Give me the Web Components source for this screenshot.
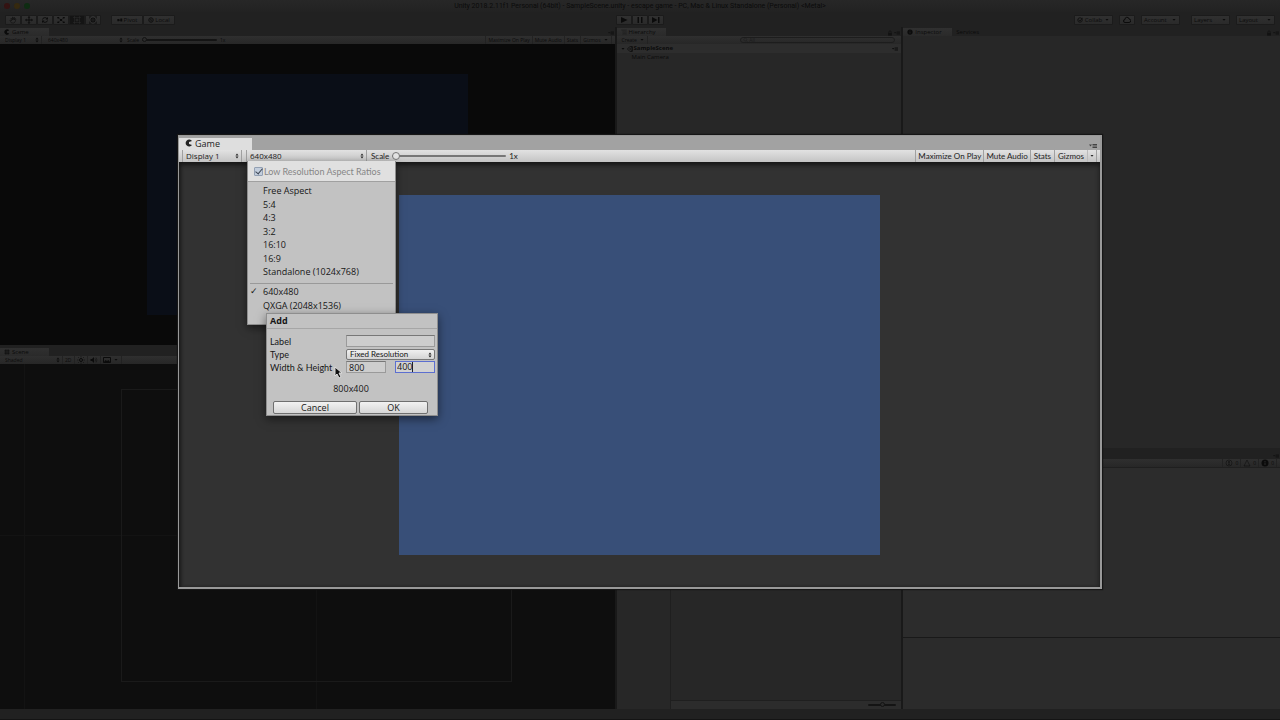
<!DOCTYPE html>
<html lang="en">
<head>
<meta charset="utf-8">
<title>Unity 2018.2.11f1 Personal</title>
<style>
  html, body {
    margin: 0;
    height: 100%;
    overflow: hidden;
    background: #212121;
    font-family: "Open Sans", "Noto Sans", sans-serif;
  }
</style>
</head>
<body>
<unity-editor></unity-editor>

<script>
// shared by every control that sits in a toolbar
const controlStyle = `
  * { box-sizing: border-box; }
  button, select, input {
    margin: 0;
    padding: 0;
    border: 0;
    background: none;
    color: inherit;
    font: inherit;
    appearance: none;
    outline: none;
    border-radius: 0;
  }
`;

class UnityElement extends HTMLElement {
  constructor() {
    super();
    this.attachShadow({ mode: 'open' });
  }

  connectedCallback() {
    this.shadowRoot.innerHTML = `<style>${controlStyle}</style>` + this.render();
  }
}

const icons = {
  hand: '<path d="M5 14 2 9l1-1 2 2-1-5 1-1 2 4V2h1l1 5 1-4h1v5l2-3 1 1-2 6-2 2z" fill="none" stroke="currentColor"/>',
  move: '<path d="M8 0l3 3H9v4h4V5l3 3-3 3V9H9v4h2l-3 3-3-3h2V9H3v2L0 8l3-3v2h4V3H5z" fill="currentColor"/>',
  rotate: '<path d="M3 7a5 4 0 0 1 9-2M13 9a5 4 0 0 1-9 2" fill="none" stroke="currentColor" stroke-width="2"/><path d="M14 2v5H9zM2 14V9h5z" fill="currentColor"/>',
  scale: '<path d="M0 2h5L2 6zM16 2h-5l3 4zM0 14h5l-3-4zM16 14h-5l3-4zM6 6h4v4H6z" fill="currentColor"/><path d="M2 3l12 10M14 3L2 13" stroke="currentColor"/>',
  rect: '<path d="M3 0v16M13 0v16M0 3h16M0 13h16" stroke="currentColor"/><circle cx="8" cy="8" r="2" fill="none" stroke="currentColor" stroke-width="2"/>',
  transform: '<path d="M1 1h4M1 1v4M15 1h-4M15 1v4M1 15h4M1 15v-4M15 15h-4M15 15v-4M3 3l10 10M13 3L3 13" stroke="currentColor"/><circle cx="8" cy="8" r="4" fill="none" stroke="currentColor" stroke-width="2"/>',
  pivot: '<path d="M1 5h5v6H1zM9 4h5v8H9zM6 7h3v2H6z" fill="currentColor"/>',
  globe: '<circle cx="8" cy="8" r="6" fill="none" stroke="currentColor" stroke-width="2"/><path d="M2 8h12M8 2v12M4 4l8 8" stroke="currentColor"/>',
  play: '<path d="M2 2l13 6-13 6z" fill="currentColor"/>',
  pause: '<path d="M3 2h3v12H3zM10 2h3v12h-3z" fill="currentColor"/>',
  step: '<path d="M0 2l11 6-11 6zM12 2h3v12h-3z" fill="currentColor"/>',
  collab: '<circle cx="8" cy="8" r="6" fill="none" stroke="currentColor" stroke-width="2"/><path d="M4 7l4 4 7-9" fill="none" stroke="currentColor" stroke-width="2"/>',
  cloud: '<path d="M4 13a3 3 0 0 1 0-6 4 4 0 0 1 8-1 3 3 0 0 1 0 7z" fill="none" stroke="currentColor" stroke-width="2"/>',
  game: '<path d="M14 4A7 7 0 1 0 14 12L8 10V6z" fill="currentColor"/>',
  scene: '<path d="M5 1v14M11 1v14M1 5h14M1 11h14" stroke="currentColor" stroke-width="2"/>',
  list: '<path d="M1 3h14M4 8h11M4 13h11" stroke="currentColor"/>',
  info: '<circle cx="8" cy="8" r="7" fill="currentColor"/><path d="M8 4v2M8 7v5" stroke="#2a2a2a" stroke-width="2"/>',
  lock: '<path d="M3 8h10v7H3z" fill="currentColor"/><path d="M5 8V4q3-4 6 0v4" fill="none" stroke="currentColor" stroke-width="2"/>',
  menu: '<path d="M0 5h6l-3 4z" fill="currentColor"/><path d="M7 5h9M7 8h9M7 11h9" stroke="currentColor" stroke-width="2"/>',
  unity: '<path d="M1 8l6-6 7-1 1 7-1 7-7-1zM5 8h5M10 8l3-5M10 8l3 5" fill="none" stroke="currentColor" stroke-width="2"/>',
  down: '<path d="M4 5h8l-4 5z" fill="currentColor"/>',
  sun: '<circle cx="8" cy="8" r="3" fill="none" stroke="currentColor" stroke-width="2"/><path d="M8 0v3M8 13v3M0 8h3M13 8h3M2 2l2 2M12 12l2 2M14 2l-2 2M4 12l-2 2" stroke="currentColor"/>',
  sound: '<path d="M1 6h3l4-4v12l-4-4H1z" fill="currentColor"/><path d="M10 5q2 3 0 6M12 3q4 5 0 10" fill="none" stroke="currentColor"/>',
  image: '<path d="M1 3h14v10H1z" fill="none" stroke="currentColor" stroke-width="2"/><path d="M2 12l3-4 3 2 3-2 3 4z" fill="currentColor"/>',
  bubble: '<circle cx="8" cy="8" r="6" fill="none" stroke="currentColor"/><path d="M8 4v5M8 10v2" stroke="currentColor" stroke-width="2"/>',
  warning: '<path d="M8 2l6 12H2z" fill="none" stroke="currentColor"/>',
  search: '<circle cx="6" cy="7" r="4" fill="none" stroke="currentColor"/><path d="M9 10l4 4" stroke="currentColor"/>'
};

class UnityIcon extends UnityElement {
  render() {
    return `
      <style>
        :host { display: inline-flex; width: 8px; height: 8px; flex: none; }
        :host([size="large"]) { width: 10px; height: 10px; }
        :host([size="small"]) { width: 6px; height: 6px; }
        svg { width: 100%; height: 100%; }
      </style>
      <svg viewBox="0 0 16 16" aria-hidden="true">${icons[this.getAttribute('name')]}</svg>
    `;
  }
}

class UnitySelect extends UnityElement {
  render() {
    return `
      <style>
        :host { display: flex; align-items: center; position: relative; }
        select { flex: 1; width: 100%; height: 100%; padding: 0 8px 0 var(--select-inset, 4px); }
        svg { position: absolute; right: 2px; top: calc(50% - 3px); width: 4px; height: 6px; pointer-events: none; }
      </style>
      <select aria-label="${this.getAttribute('label')}"><option>${this.getAttribute('value')}</option></select>
      <svg viewBox="0 0 8 12"><path d="M1 5l3-4 3 4zM1 7l3 4 3-4z" fill="currentColor"/></svg>
    `;
  }
}

// grouped push button of the main toolbar
class UnityButton extends UnityElement {
  render() {
    return `
      <style>
        :host { display: flex; }
        button {
          flex: 1;
          display: flex;
          align-items: center;
          justify-content: center;
          gap: 1px;
          height: 10px;
          padding: 0 2px;
          background: linear-gradient(#303030, #2a2a2a);
          border: 1px solid #1b1b1b;
          border-radius: 1px;
        }
        :host([active]) button { background: #141414; color: #2c2c2c; }
        :host([spread]) button { justify-content: space-between; }
      </style>
      <button aria-label="${this.getAttribute('label') || ''}"><slot></slot></button>
    `;
  }
}

class UnityPanel extends UnityElement {
  render() {
    return `
      <style>
        :host { display: flex; flex-direction: column; min-width: 0; min-height: 0; background: #272727; font-size: 6px; color: #0b0b0b; }
        .tabs { display: flex; align-items: flex-end; height: 9px; flex: none; background: #212121; }
        .corner { display: flex; gap: 1px; margin-left: auto; padding-right: 1px; color: #121212; }
        .content { flex: 1; min-height: 0; position: relative; display: flex; flex-direction: column; }
      </style>
      <div class="tabs"><slot name="tab"></slot><div class="corner"><slot name="corner"></slot></div></div>
      <slot name="tools"></slot>
      <div class="content"><slot></slot></div>
    `;
  }
}

class UnityTab extends UnityElement {
  render() {
    return `
      <style>
        :host { display: block; min-width: 49px; height: 8px; background: linear-gradient(#303030, #2a2a2a); }
        :host([idle]) { background: none; }
        button { display: flex; align-items: center; gap: 2px; height: 8px; padding: 0 4px; line-height: 8px; }
      </style>
      <button role="tab"><slot></slot></button>
    `;
  }
}

class UnityToolbar extends UnityElement {
  render() {
    return `
      <style>
        :host {
          display: flex;
          align-items: stretch;
          flex: none;
          height: 8px;
          padding: 0 3px;
          background: linear-gradient(#2f2f2f, #272727);
          font-size: 5px;
          line-height: 8px;
        }
        ::slotted(*) { border-right: 1px solid #222; padding: 0 2px; }
        ::slotted(.plain) { border: 0; }
        ::slotted(.push) { margin-left: auto; border-left: 1px solid #222; }
      </style>
      <slot></slot>
    `;
  }
}

class ToolItem extends UnityElement {
  render() {
    return `
      <style>
        :host { display: flex; align-items: center; }
        button { display: flex; align-items: center; gap: 2px; line-height: 8px; white-space: nowrap; }
      </style>
      <button><slot></slot></button>
    `;
  }
}

class ScaleSlider extends UnityElement {
  render() {
    return `
      <style>
        :host { display: flex; align-items: center; gap: 3px; }
        input { width: var(--track, 75px); height: 8px; }
        input::-webkit-slider-runnable-track { height: 2px; background: var(--groove, #141414); border-radius: 1px; }
        input::-webkit-slider-thumb {
          appearance: none;
          width: var(--knob, 5px);
          height: var(--knob, 5px);
          margin-top: var(--knob-lift, -2px);
          border: 1px solid var(--groove, #141414);
          border-radius: 50%;
          background: var(--knob-fill, #2a2a2a);
        }
      </style>
      <label for="scale"><slot></slot></label>
      <input id="scale" type="range" min="1" max="5" value="${this.getAttribute('value') || 1}" aria-label="Scale">
      <slot name="value"></slot>
    `;
  }
}

class SizeMenu extends UnityElement {
  render() {
    const builtIn = ['Free Aspect', '5:4', '4:3', '3:2', '16:10', '16:9', 'Standalone (1024x768)'];
    const custom = ['640x480', 'QXGA (2048x1536)'];
    const item = name => `<button role="menuitemradio" class="${name === '640x480' ? 'checked' : ''}">${name}</button>`;
    return `
      <style>
        :host {
          display: block;
          width: 149px;
          height: 164px;
          background: #c2c2c2;
          border: 1px solid #8e8e8e;
          border-top: 0;
          box-shadow: 0 3px 8px rgba(0, 0, 0, .5);
          color: #161616;
          font-size: 9px;
        }
        label {
          display: flex;
          align-items: center;
          height: 21px;
          padding-left: 6px;
          background: #e0e0e0;
          border-bottom: 1px solid #a0a0a0;
          color: #868686;
          font-family: Lato, sans-serif;
          white-space: nowrap;
        }
        input { width: 9px; height: 9px; margin-right: 1px; background: #c3cedd; border: 1px solid #93a0b3; border-radius: 1px; }
        input::before {
          content: "";
          display: block;
          width: 3px;
          height: 6px;
          margin: -1px 0 0 2px;
          border: solid #3d4654;
          border-width: 0 1px 1px 0;
          transform: rotate(40deg);
        }
        .group { display: flex; flex-direction: column; justify-content: space-between; height: 94px; margin-top: 2px; }
        .custom { height: 27px; margin-top: 1px; }
        hr { margin: 5px 2px 0; border: 0; border-top: 1px solid #999; }
        button { position: relative; padding-left: 15px; line-height: 13px; text-align: left; white-space: nowrap; }
        .checked::before { content: "✓"; position: absolute; left: 2px; font: bold 9px/13px "DejaVu Sans", sans-serif; }
      </style>
      <label><input type="checkbox" checked>Low Resolution Aspect Ratios</label>
      <div class="group">${builtIn.map(item).join('')}</div>
      <hr>
      <div class="group custom">${custom.map(item).join('')}</div>
    `;
  }
}

class AddSizeDialog extends UnityElement {
  render() {
    return `
      <style>
        :host {
          display: block;
          width: 172px;
          background: #c2c2c2;
          border: 1px solid #8e8e8e;
          box-shadow: 0 3px 9px rgba(0, 0, 0, .5);
          color: #161616;
          font-size: 9px;
        }
        h2 { margin: 0; padding-left: 3px; font-size: 9px; line-height: 14px; border-bottom: 1px solid #a6a6a6; }
        form { display: grid; grid-template-columns: 67px 40px 40px; column-gap: 9px; padding: 6px 2px 0 3px; }
        label { font-family: Lato, sans-serif; line-height: 13px; white-space: nowrap; }
        input { width: 100%; min-width: 0; height: 12px; padding: 0 2px; background: #cdcdcd; border: 1px solid #9a9a9a; border-top-color: #777; line-height: 10px; }
        .wide { grid-column: 2 / 4; }
        unity-select {
          height: 11px;
          margin-top: 1px;
          border: 1px solid #777;
          border-radius: 2px;
          background: linear-gradient(#f0f0f0, #d4d4d4);
          font: 8px/9px Lato, sans-serif;
          --select-inset: 3px;
        }
        .focus { display: flex; align-items: center; height: 12px; border: 1px solid #5c6fd0; background: #d2d2d2; }
        .focus input { height: 10px; border: 0; background: none; padding: 0 0 0 1px; field-sizing: content; width: auto; border-right: 1px solid #222; }
        output { grid-column: 1 / 4; margin: 8px 3px 0 0; line-height: 13px; text-align: center; }
        .actions { grid-column: 1 / 4; display: grid; grid-template-columns: 84px 69px; gap: 2px; margin: 6px 0 1px 3px; }
        button { height: 13px; border: 1px solid #6f6f6f; border-radius: 2px; background: linear-gradient(#f2f2f2, #d6d6d6); line-height: 11px; }
      </style>
      <h2>Add</h2>
      <form onsubmit="return false">
        <label for="label">Label</label><input id="label" class="wide">
        <label>Type</label><unity-select class="wide" label="Type" value="Fixed Resolution"></unity-select>
        <label for="width">Width &amp; Height</label><input id="width" value="800">
        <span class="focus"><input aria-label="Height" value="400"></span>
        <output>800x400</output>
        <div class="actions"><button type="button">Cancel</button><button>OK</button></div>
      </form>
    `;
  }
}

class GameWindow extends UnityElement {
  render() {
    return `
      <style>
        :host {
          display: flex;
          flex-direction: column;
          background: #323232;
          border: solid #999;
          border-width: 1px 2px 2px 1px;
          box-shadow: 0 0 1px 1px #161616;
          color: #222;
          font-size: 9px;
        }
        .tabs { display: flex; align-items: flex-end; justify-content: space-between; height: 14px; flex: none; background: #a2a2a2; }
        .tab { display: flex; align-items: flex-start; gap: 2px; width: 73px; height: 12px; padding-left: 6px; background: #dedede; line-height: 11px; }
        .tab unity-icon { margin-top: 1px; }
        .tabs > unity-icon { margin-right: 3px; color: #444; }
        .bar {
          display: flex;
          flex: none;
          height: 12px;
          padding: 0 3px;
          background: linear-gradient(#e2e2e2, #c4c4c4);
          font-size: 8px;
          line-height: 12px;
          --track: 114px;
          --knob: 8px;
          --knob-lift: -3px;
          --groove: #777;
          --knob-fill: #e4e4e4;
          --select-inset: 3px;
        }
        unity-select { border: solid #a0a0a0; border-width: 0 1px; }
        .display { width: 60px; }
        .size { width: 121px; margin-left: 4px; }
        scale-slider { padding-left: 4px; font-family: Lato, sans-serif; }
        .options { display: flex; margin-left: auto; border-right: 1px solid #a0a0a0; font-family: Lato, sans-serif; }
        .options button { padding: 0 2px; border-left: 1px solid #a0a0a0; white-space: nowrap; }
        .options .wide { padding: 0 3px; }
        .options .arrow { display: flex; align-items: center; padding: 0 1px; border-color: #bbb; }
        .view { flex: 1; min-height: 0; padding-top: 1px; display: grid; place-items: center; box-shadow: inset 0 3px 5px #161616, inset 2px 0 3px #222; }
        .camera { height: 85%; aspect-ratio: 4 / 3; background: #384f78; }
        /* popups open over the view */
        size-menu { position: absolute; left: 68px; top: 25px; }
        add-size-dialog { position: absolute; left: 87px; top: 177px; }
        .cursor { position: absolute; left: 155px; top: 230px; width: 10px; height: 14px; }
      </style>
      <div class="tabs">
        <button class="tab" role="tab"><unity-icon name="game"></unity-icon>Game</button>
        <unity-icon name="menu"></unity-icon>
      </div>
      <div class="bar">
        <unity-select class="display" label="Display" value="Display 1"></unity-select>
        <unity-select class="size" label="Size" value="640x480"></unity-select>
        <scale-slider>Scale<span slot="value">1x</span></scale-slider>
        <div class="options">
          <button>Maximize On Play</button>
          <button>Mute Audio</button>
          <button class="wide">Stats</button>
          <button class="wide">Gizmos</button>
          <button class="arrow" aria-label="Gizmo options"><unity-icon name="down" size="small"></unity-icon></button>
        </div>
      </div>
      <div class="view"><div class="camera"></div></div>
      <size-menu></size-menu>
      <add-size-dialog></add-size-dialog>
      <svg class="cursor" viewBox="0 0 10 14"><path d="M1 1v9l2-2 2 4 2-1-2-4h3z" fill="#111" stroke="#ddd"/></svg>
    `;
  }
}

class UnityEditor extends UnityElement {
  render() {
    const tools = ['hand', 'move', 'rotate', 'scale', 'rect', 'transform'];
    return `
      <style>
        :host { display: flex; flex-direction: column; height: 100vh; position: relative; color: #0b0b0b; font-size: 6px; }
        .title { display: grid; grid-template-columns: 1fr auto 1fr; align-items: center; height: 12px; background: linear-gradient(#272727, #222); font: 7px/12px Roboto, sans-serif; }
        .lights { display: flex; gap: 4px; padding-left: 4px; }
        .lights i { width: 6px; height: 6px; border-radius: 50%; background: #341312; }
        .lights i:nth-child(2) { background: #35290f; }
        .lights i:nth-child(3) { background: #0e2c12; }
        .toolbar { display: grid; grid-template-columns: 1fr auto 1fr; align-items: center; height: 15px; }
        .set { display: flex; }
        .left, .right { display: flex; gap: 10px; padding: 0 5px; }
        .right { justify-content: flex-end; gap: 6px; }
        .tools unity-button { width: 16px; }
        .mode unity-button { width: 32px; }
        .play unity-button { width: 16px; }
        .drop { width: 39px; }
        .cloud { width: 16px; }
        .layers { margin-left: 5px; }
        .work { flex: 1; min-height: 0; display: grid; grid-template-columns: 615fr 285fr 377fr; gap: 2px; background: #191919; }
        .column { display: flex; flex-direction: column; gap: 2px; min-width: 0; min-height: 0; background: #212121; }
        .column > * { flex: 1 1 0; }
        .column > .console, .column > .project { flex: 0 0 259px; }
        .column > .scene { flex: 0 0 362px; }
        .camera { height: 80%; aspect-ratio: 4 / 3; background: #0a0e17; margin: auto; }
        .black { flex: 1; display: flex; background: #090909; }
        .canvas { flex: 1; position: relative; background: linear-gradient(90deg, transparent 24px, #131313 24px 25px, transparent 25px) #0e0e0e; }
        /* outline of the UI canvas and the grid axes behind it */
        .canvas i { position: absolute; inset: 25px 103px 27px 121px; border: 1px solid #1a1a1a; }
        .canvas b { position: absolute; inset: 0 auto 0 316px; border-left: 1px solid #131313; }
        .canvas u { position: absolute; inset: 171px 0 auto 0; border-top: 1px solid #131313; }
        .display { width: 39px; padding: 0; --select-inset: 2px; }
        .size { width: 83px; }
        .shaded { width: 60px; --select-inset: 0px; }
        .row { display: flex; align-items: center; gap: 1px; height: 9px; padding: 0 3px; line-height: 9px; }
        .row.scene-row { background: #2d2d2d; font-weight: bold; }
        .row unity-icon:last-child { margin-left: auto; }
        .row.child { padding-left: 15px; }
        .find { display: flex; align-items: center; width: 155px; height: 6px; margin: 1px 3px 0 auto; padding: 0 2px; border: 1px solid #1d1d1d; border-radius: 3px; color: #1b1b1b; }
        .find input { flex: 1; min-width: 0; font-size: 5px; height: 4px; line-height: 4px; }
        .find input::placeholder { color: #1b1b1b; }
        .assets { flex: 1; display: grid; grid-template-columns: 54px 1fr; grid-template-rows: 1fr 9px; }
        .tree { grid-row: 1 / 3; border-right: 1px solid #1f1f1f; }
        .zoom { display: flex; justify-content: flex-end; padding-right: 5px; background: #2c2c2c; border-top: 1px solid #1f1f1f; --track: 28px; }
        .log { flex: 168; background: #2c2c2c; border-top: 1px solid #1f1f1f; }
        .detail { flex: 71; background: #2b2b2b; border-top: 1px solid #191919; }
        .status { height: 11px; border-bottom: 1px solid #141414; }
        game-window { position: absolute; inset: 135px 178px 131px 178px; }
      </style>
      <div class="title">
        <div class="lights"><i></i><i></i><i></i></div>
        <span>Unity 2018.2.11f1 Personal (64bit) - SampleScene.unity - escape game - PC, Mac &amp; Linux Standalone (Personal) &lt;Metal&gt;</span>
      </div>
      <div class="toolbar">
        <div class="left">
          <div class="set tools">
            ${tools.map(name => `<unity-button label="${name}" ${name === 'rect' ? 'active' : ''}><unity-icon name="${name}"></unity-icon></unity-button>`).join('')}
          </div>
          <div class="set mode">
            <unity-button><unity-icon name="pivot" size="small"></unity-icon>Pivot</unity-button>
            <unity-button><unity-icon name="globe" size="small"></unity-icon>Local</unity-button>
          </div>
        </div>
        <div class="set play">
          <unity-button label="Play"><unity-icon name="play"></unity-icon></unity-button>
          <unity-button label="Pause"><unity-icon name="pause"></unity-icon></unity-button>
          <unity-button label="Step"><unity-icon name="step"></unity-icon></unity-button>
        </div>
        <div class="right">
          <unity-button class="drop" spread><unity-icon name="collab" size="small"></unity-icon>Collab<unity-icon name="down" size="small"></unity-icon></unity-button>
          <unity-button class="cloud" label="Services"><unity-icon name="cloud"></unity-icon></unity-button>
          <unity-button class="drop" spread>Account<unity-icon name="down" size="small"></unity-icon></unity-button>
          <unity-button class="drop layers" spread>Layers<unity-icon name="down" size="small"></unity-icon></unity-button>
          <unity-button class="drop" spread>Layout<unity-icon name="down" size="small"></unity-icon></unity-button>
        </div>
      </div>
      <div class="work">
        <div class="column">
          <unity-panel class="game">
            <unity-tab slot="tab"><unity-icon name="game" size="small"></unity-icon>Game</unity-tab>
            <unity-icon slot="corner" name="menu" size="small"></unity-icon>
            <unity-toolbar slot="tools">
              <unity-select class="display" label="Display" value="Display 1"></unity-select>
              <unity-select class="size plain" label="Size" value="640x480"></unity-select>
              <scale-slider class="plain">Scale<span slot="value">1x</span></scale-slider>
              <tool-item class="push">Maximize On Play</tool-item>
              <tool-item>Mute Audio</tool-item>
              <tool-item>Stats</tool-item>
              <tool-item>Gizmos<unity-icon name="down" size="small"></unity-icon></tool-item>
            </unity-toolbar>
            <div class="black"><div class="camera"></div></div>
          </unity-panel>
          <unity-panel class="scene">
            <unity-tab slot="tab"><unity-icon name="scene" size="small"></unity-icon>Scene</unity-tab>
            <unity-toolbar slot="tools">
              <unity-select class="shaded" label="Draw mode" value="Shaded"></unity-select>
              <tool-item>2D</tool-item>
              <tool-item><unity-icon name="sun"></unity-icon></tool-item>
              <tool-item><unity-icon name="sound"></unity-icon></tool-item>
              <tool-item><unity-icon name="image"></unity-icon><unity-icon name="down" size="small"></unity-icon></tool-item>
            </unity-toolbar>
            <div class="canvas"><b></b><u></u><i></i></div>
          </unity-panel>
        </div>
        <div class="column">
          <unity-panel>
            <unity-tab slot="tab"><unity-icon name="list" size="small"></unity-icon>Hierarchy</unity-tab>
            <unity-icon slot="corner" name="lock" size="small"></unity-icon>
            <unity-icon slot="corner" name="menu" size="small"></unity-icon>
            <unity-toolbar slot="tools">
              <tool-item>Create<unity-icon name="down" size="small"></unity-icon></tool-item>
              <label class="find plain"><unity-icon name="search" size="small"></unity-icon><input placeholder="All" aria-label="Search hierarchy"></label>
            </unity-toolbar>
            <div class="row scene-row"><unity-icon name="down" size="small"></unity-icon><unity-icon name="unity" size="small"></unity-icon>SampleScene<unity-icon name="menu" size="small"></unity-icon></div>
            <div class="row child">Main Camera</div>
          </unity-panel>
          <unity-panel class="project">
            <div class="assets">
              <div class="tree"></div>
              <div></div>
              <div class="zoom"><scale-slider value="3"></scale-slider></div>
            </div>
          </unity-panel>
        </div>
        <div class="column">
          <unity-panel>
            <unity-tab slot="tab"><unity-icon name="info" size="small"></unity-icon>Inspector</unity-tab>
            <unity-tab slot="tab" idle>Services</unity-tab>
            <unity-icon slot="corner" name="lock" size="small"></unity-icon>
            <unity-icon slot="corner" name="menu" size="small"></unity-icon>
          </unity-panel>
          <unity-panel class="console">
            <unity-icon slot="corner" name="menu" size="small"></unity-icon>
            <unity-toolbar slot="tools">
              <tool-item class="push"><unity-icon name="bubble"></unity-icon>0</tool-item>
              <tool-item><unity-icon name="warning"></unity-icon>0</tool-item>
              <tool-item><unity-icon name="info"></unity-icon>0</tool-item>
            </unity-toolbar>
            <div class="log"></div>
            <div class="detail"></div>
          </unity-panel>
        </div>
      </div>
      <div class="status"></div>
      <game-window></game-window>
    `;
  }
}

customElements.define('unity-icon', UnityIcon);
customElements.define('unity-select', UnitySelect);
customElements.define('unity-button', UnityButton);
customElements.define('unity-panel', UnityPanel);
customElements.define('unity-tab', UnityTab);
customElements.define('unity-toolbar', UnityToolbar);
customElements.define('tool-item', ToolItem);
customElements.define('scale-slider', ScaleSlider);
customElements.define('size-menu', SizeMenu);
customElements.define('add-size-dialog', AddSizeDialog);
customElements.define('game-window', GameWindow);
customElements.define('unity-editor', UnityEditor);
</script>
</body>
</html>
